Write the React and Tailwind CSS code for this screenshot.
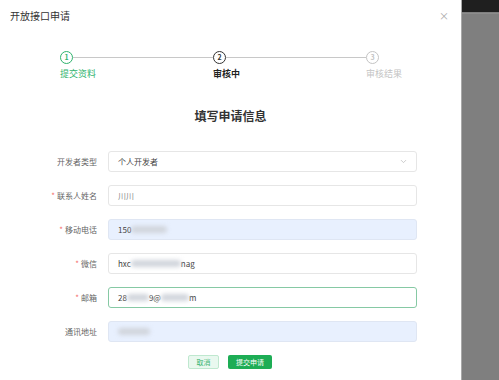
import { ChevronDown } from 'lucide-react'

const font = { fontFamily: '"Noto Sans CJK SC", "Noto Sans", sans-serif' }

function Blur({ w }) {
  return <span className="inline-block h-[7px] rounded-sm bg-gray-300 blur-[2px] align-middle" style={{ width: w }} />
}

function Row({ label, required, children, className = '' }) {
  return (
    <div className="flex items-center h-[21px]">
      <div className="w-[97px] text-right text-[8px] text-[#666]">
        {required && <span className="text-[#f56c6c] mr-[2px]">*</span>}
        {label}
      </div>
      <div className={`ml-[11px] w-[309px] h-full rounded-[3px] border flex items-center pl-[9px] pr-[8px] text-[8px] text-[#444] ${className}`}>
        {children}
      </div>
    </div>
  )
}

function Step({ n, label, state, line }) {
  const circle = {
    done: 'border-[#2fb36d] text-[#2fb36d]',
    active: 'border-[#333] text-[#333]',
    wait: 'border-[#c4c4c4] text-[#c4c4c4]',
  }[state]
  const text = {
    done: 'text-[#2fb36d]',
    active: 'text-[#222] font-bold',
    wait: 'text-[#c4c4c4]',
  }[state]
  return (
    <div className={line ? 'w-[153px]' : 'w-[60px]'}>
      <div className="flex items-center">
        <div className={`w-[13px] h-[13px] rounded-full border-[1.5px] flex items-center justify-center text-[7px] font-bold leading-none ${circle}`}>{n}</div>
        {line && <div className="flex-1 h-[1.5px] bg-[#c8c8c8]" />}
      </div>
      <div className={`mt-[4px] text-[9px] leading-[12px] ${text}`}>{label}</div>
    </div>
  )
}

export default function App() {
  return (
    <div className="flex w-[499px] h-[380px] overflow-hidden" style={font}>
      <div className="w-[461px] h-full bg-white relative">
        <div className="pl-[10px] pt-[8px] text-[10px] leading-[16px] text-[#333]">开放接口申请</div>
        <div className="absolute right-[12px] top-[8px] text-[10px] text-[#aaa]">×</div>

        <div className="flex pl-[60px] mt-[27px]">
          <Step n="1" label="提交资料" state="done" line />
          <Step n="2" label="审核中" state="active" line />
          <Step n="3" label="审核结果" state="wait" />
        </div>

        <div className="mt-[27px] text-center text-[12px] font-bold text-[#333] leading-[18px]">填写申请信息</div>

        <div className="mt-[26px] flex flex-col gap-[13px]">
          <Row label="开发者类型" className="border-[#e6e6e6] justify-between">
            <span>个人开发者</span>
            <ChevronDown className="w-[9px] h-[9px] text-[#bbb]" />
          </Row>
          <Row label="联系人姓名" required className="border-[#e6e6e6] text-[#888]">川川</Row>
          <Row label="移动电话" required className="border-[#dfe6f3] bg-[#e8f0fe]">
            <span>150</span><Blur w={36} />
          </Row>
          <Row label="微信" required className="border-[#e6e6e6]">
            <span>hxc</span><Blur w={50} /><span>nag</span>
          </Row>
          <Row label="邮箱" required className="border-[#86c9a4]">
            <span>28</span><Blur w={22} /><span>9@</span><Blur w={28} /><span>m</span>
          </Row>
          <Row label="通讯地址" className="border-[#dfe6f3] bg-[#e8f0fe]">
            <Blur w={32} />
          </Row>
        </div>

        <div className="mt-[13px] flex pl-[188px] gap-[9px]">
          <div className="w-[31px] h-[14px] rounded-[2px] border border-[#bfe8cf] bg-[#e9f8ef] text-[#3bb46f] text-[7px] flex items-center justify-center">取消</div>
          <div className="w-[44px] h-[14px] rounded-[2px] bg-[#1dad55] text-white text-[7px] flex items-center justify-center">提交申请</div>
        </div>
      </div>
      <div className="flex-1 h-full bg-[#7f7f7f] border-l border-[#a9a9a9] flex flex-col">
        <div className="h-[12px] bg-[#1f1f1f]" />
        <div className="h-px bg-[#8c8c8c] mt-px" />
      </div>
    </div>
  )
}
